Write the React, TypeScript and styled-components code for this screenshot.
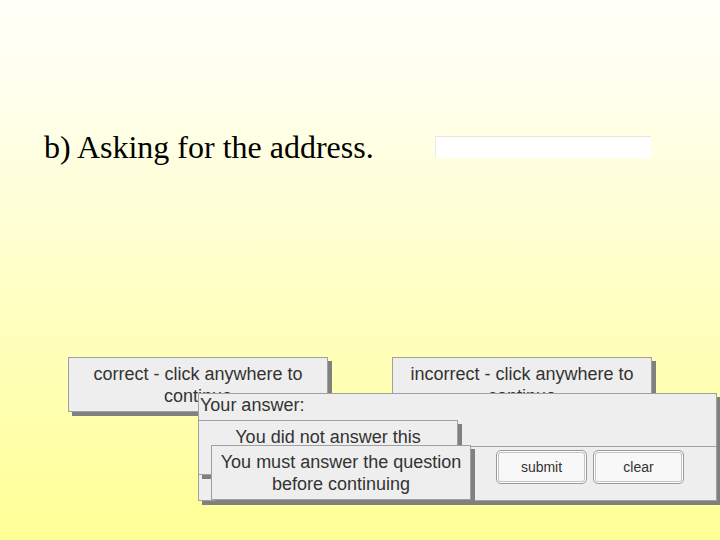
import React from "react";
import styled, { createGlobalStyle } from "styled-components";

const GlobalStyle = createGlobalStyle`
  html, body {
    margin: 0;
    padding: 0;
  }
  body {
    font-family: "Liberation Sans", Arial, sans-serif;
  }
`;

interface Spot {
  x: number;
  y: number;
  w: number;
  h: number;
}

const Slide = styled.div`
  position: relative;
  width: 720px;
  height: 540px;
  overflow: hidden;
  background: linear-gradient(to bottom, #fffff6 0%, #fffff0 15%, #ffffc4 55%, #ffff96 100%);
`;

const Header = styled.div`
  display: flex;
  align-items: center;
  padding: 130px 0 0 44px;
`;

const Title = styled.h1`
  margin: 0;
  font-family: "Liberation Serif", "Times New Roman", serif;
  font-weight: normal;
  font-size: 32px;
  line-height: 34px;
  color: #000;
`;

const AddressField = styled.div`
  width: 215px;
  height: 21px;
  margin-left: 61px;
  background: #ffffff;
  border-top: 1px solid #e6e6dc;
  border-left: 1px solid #ececec;
`;

// popups sit on top of each other, so each one is placed by its spot
const Popup = styled.div<{ $spot: Spot }>`
  position: absolute;
  left: ${(p) => p.$spot.x}px;
  top: ${(p) => p.$spot.y}px;
  width: ${(p) => p.$spot.w}px;
  height: ${(p) => p.$spot.h}px;
  box-sizing: border-box;
  background: #eeeeee;
  border: 1px solid #a0a0a0;
  box-shadow: 4px 4px 0 #808080;
  color: #333333;
  font-size: 18px;
  line-height: 22px;
  overflow: hidden;
`;

const Message = styled(Popup)`
  padding: 5px 6px 0;
  text-align: center;
`;

const AnswerPanel = styled(Popup)`
  display: flex;
  flex-direction: column;
`;

const AnswerLabel = styled.div`
  height: 52px;
  padding: 0 0 0 1px;
  border-bottom: 1px solid #a0a0a0;
`;

const ButtonBar = styled.div`
  display: flex;
  justify-content: flex-end;
  gap: 6px;
  padding: 3px 32px 0 0;
`;

const Button = styled.button`
  width: 91px;
  height: 34px;
  border: 1px solid #9a9a9a;
  border-radius: 5px;
  background: #f8f8f8;
  box-shadow: inset 0 0 0 1px #ffffff, inset 0 0 0 2px #c4c4c4;
  font-family: "Liberation Sans", Arial, sans-serif;
  font-size: 14px;
  color: #333333;
  padding: 0;
`;

export default function App() {
  return (
    <>
      <GlobalStyle />
      <Slide>
        <Header>
          <Title>b) Asking for the address.</Title>
          <AddressField />
        </Header>

        <Message $spot={{ x: 68, y: 357, w: 260, h: 55 }}>
          correct - click anywhere to continue
        </Message>
        <Message $spot={{ x: 392, y: 357, w: 260, h: 55 }}>
          incorrect - click anywhere to continue
        </Message>

        <AnswerPanel $spot={{ x: 198, y: 393, w: 519, h: 108 }}>
          <AnswerLabel>Your answer:</AnswerLabel>
          <ButtonBar>
            <Button>submit</Button>
            <Button>clear</Button>
          </ButtonBar>
        </AnswerPanel>

        <Message $spot={{ x: 198, y: 420, w: 260, h: 55 }}>
          You did not answer this question
        </Message>
        <Message $spot={{ x: 211, y: 445, w: 260, h: 55 }}>
          You must answer the question before continuing
        </Message>
      </Slide>
    </>
  );
}
